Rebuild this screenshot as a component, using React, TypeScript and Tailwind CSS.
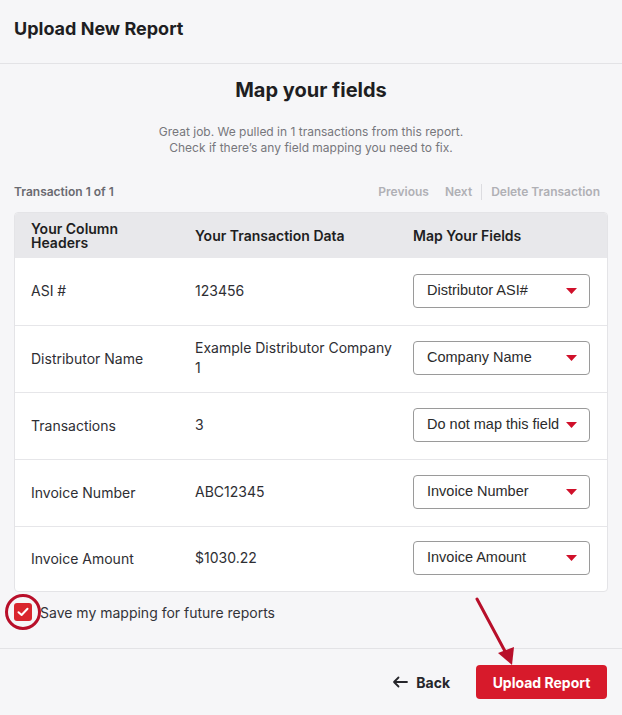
import React from "react";

const rows = [
  { header: "ASI #", data: "123456", field: "Distributor ASI#" },
  { header: "Distributor Name", data: "Example Distributor Company 1", field: "Company Name" },
  { header: "Transactions", data: "3", field: "Do not map this field" },
  { header: "Invoice Number", data: "ABC12345", field: "Invoice Number" },
  { header: "Invoice Amount", data: "$1030.22", field: "Invoice Amount" },
];

function FieldSelect({ value }: { value: string }) {
  return (
    <div className="w-[177px] h-[34px] border border-[#9a9a9a] rounded-[4px] bg-white flex items-center justify-between pl-[13px] pr-[12px] font-['Liberation_Sans',Arial,sans-serif] text-[14.5px] text-[#2b2b2b]">
      <span className="whitespace-nowrap">{value}</span>
      <svg width="11" height="6" viewBox="0 0 11 6" className="shrink-0">
        <path d="M0 0 L11 0 L5.5 6 Z" fill="#d0102a" />
      </svg>
    </div>
  );
}

export default function App() {
  return (
    <div className="w-[622px] h-[715px] bg-[#f6f6f8] flex flex-col font-['Inter',sans-serif] text-[#222] overflow-hidden">
      <div className="h-[64px] shrink-0 border-b border-[#e3e3e6] flex items-center px-[14px]">
        <h1 className="text-[18px] font-bold text-[#1e1e22] pb-[6px]">Upload New Report</h1>
      </div>

      <div className="flex-1 flex flex-col px-[14px]">
        <h2 className="text-center text-[20px] font-bold text-[#1e1e22] mt-[12px] leading-[28px]">
          Map your fields
        </h2>
        <p className="text-center text-[12px] leading-[16px] text-[#77777c] mt-[20px]">
          Great job. We pulled in 1 transactions from this report.
          <br />
          Check if there’s any field mapping you need to fix.
        </p>

        <div className="flex items-center justify-between mt-[27px] text-[12px] font-semibold">
          <span className="text-[#6a6a70]">Transaction 1 of 1</span>
          <div className="flex items-center text-[#b0b0b5] pr-[8px]">
            <span>Previous</span>
            <span className="ml-[16px]">Next</span>
            <span className="mx-[9px] w-px h-[16px] bg-[#dcdce0]" />
            <span>Delete Transaction</span>
          </div>
        </div>

        <div className="mt-[11px] rounded-[4px] border border-[#e4e4e7] overflow-hidden bg-white">
          <div className="grid grid-cols-[180px_218px_1fr] h-[45px] items-center bg-[#e8e8eb] text-[14px] font-semibold text-[#1e1e22] leading-[14px]">
            <div className="pl-[16px] max-w-[130px]">Your Column Headers</div>
            <div>Your Transaction Data</div>
            <div>Map Your Fields</div>
          </div>
          {rows.map((r, i) => (
            <div
              key={r.header}
              className={`grid grid-cols-[180px_218px_1fr] ${i === 4 ? "h-[65px]" : "h-[67px]"} items-center text-[14px] text-[#2e2e33] ${i > 0 ? "border-t border-[#e6e6e9]" : ""}`}
            >
              <div className="pl-[16px] pb-[2px]">{r.header}</div>
              <div className="pr-[14px] pb-[2px] leading-[20px]">{r.data}</div>
              <div className="pb-[2px]">
                <FieldSelect value={r.field} />
              </div>
            </div>
          ))}
        </div>

        <div className="relative flex items-center mt-[10px] h-[20px]">
          <span className="w-[18px] h-[18px] rounded-[3px] bg-[#d9262e] flex items-center justify-center">
            <svg width="12" height="10" viewBox="0 0 12 10">
              <path d="M1.5 5.2 L4.6 8 L10.5 1.8" stroke="white" strokeWidth="2" fill="none" strokeLinecap="round" strokeLinejoin="round" />
            </svg>
          </span>
          <span className="ml-[8px] text-[14px] text-[#333338]">
            Save my mapping for future reports
          </span>
          <span className="absolute left-[-9px] top-[-8px] w-[36px] h-[36px] rounded-full border-[3px] border-[#b80f2a]" />
        </div>
      </div>

      <div className="relative h-[67px] shrink-0 border-t border-[#e3e3e6] flex items-center justify-end px-[15px]">
        <button className="flex items-center gap-[8px] text-[14px] font-bold text-[#26262b] mr-[26px]">
          <svg width="16" height="12" viewBox="0 0 16 12">
            <path d="M15 6 H2 M6.5 1.5 L2 6 L6.5 10.5" stroke="#26262b" strokeWidth="1.8" fill="none" strokeLinecap="round" strokeLinejoin="round" />
          </svg>
          Back
        </button>
        <button className="w-[131px] h-[34px] rounded-[4px] bg-[#d71a2b] text-white text-[14px] font-bold">
          Upload Report
        </button>
        <svg className="absolute left-[470px] top-[-52px]" width="50" height="72" viewBox="0 0 50 72">
          <path d="M7 2 L37 58" stroke="#b80f2a" strokeWidth="3" strokeLinecap="round" />
          <path d="M28 56 L42 68 L44 50 Z" fill="#b80f2a" />
        </svg>
      </div>
    </div>
  );
}
